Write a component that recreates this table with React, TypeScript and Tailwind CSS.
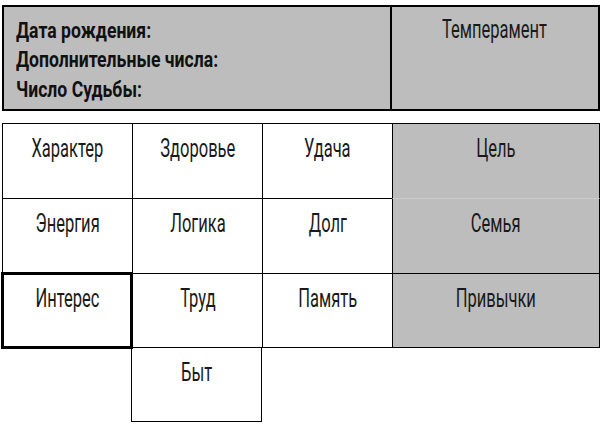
const font = { fontFamily: 'Roboto, "Liberation Sans", sans-serif' }

type Cell = { label?: string; tone?: 'white' | 'grey' | 'none'; cls: string }

const rows: Cell[][] = [
  [
    { label: 'Характер', cls: 'border-l border-t' },
    { label: 'Здоровье', cls: 'border-l border-t' },
    { label: 'Удача', cls: 'border-l border-t' },
    { label: 'Цель', tone: 'grey', cls: 'border-l border-t border-r' },
  ],
  [
    { label: 'Энергия', cls: 'border-l border-t' },
    { label: 'Логика', cls: 'border-l border-t' },
    { label: 'Долг', cls: 'border-l border-t' },
    { label: 'Семья', tone: 'grey', cls: 'border-l border-t border-r border-t-[#cbcbcb]' },
  ],
  [
    { label: 'Интерес', cls: 'border-l border-t border-b relative z-10 outline-3 outline-black -outline-offset-2' },
    { label: 'Труд', cls: 'border-l border-t border-b' },
    { label: 'Память', cls: 'border-l border-t border-b' },
    { label: 'Привычки', tone: 'grey', cls: 'border-l border-t border-r border-b' },
  ],
  [
    { tone: 'none', cls: 'border-r' },
    { label: 'Быт', cls: 'border-r border-b' },
    { tone: 'none', cls: '' },
    { tone: 'none', cls: '' },
  ],
]

function Label({ text }: { text: string }) {
  return (
    <span className="inline-block scale-x-[0.66] text-[25px] leading-none text-[#1a1a1a] whitespace-nowrap">{text}</span>
  )
}

export default function App() {
  return (
    <div className="w-[602px] h-[427px] bg-white pt-[5px] pl-[2px]" style={font}>
      <div className="flex w-[598px] h-[106px] border-2 border-black bg-[#bdbdbd]">
        <div className="w-[388px] border-r-2 border-black pl-[12px] pt-[9px]">
          {['Дата рождения:', 'Дополнительные числа:', 'Число Судьбы:'].map((t) => (
            <div key={t} className="h-[29.5px] flex items-center">
              <span className="inline-block origin-left scale-x-[0.8] text-[22px] font-bold leading-none text-[#111] whitespace-nowrap">
                {t}
              </span>
            </div>
          ))}
        </div>
        <div className="flex-1 flex justify-center pt-[10px]">
          <Label text="Темперамент" />
        </div>
      </div>

      <div className="mt-[12px] grid grid-cols-[130px_130px_130px_208px] grid-rows-[75px_75px_75px_74px]">
        {rows.flat().map((c, i) => (
          <div
            key={i}
            className={`border-black flex justify-center pt-[12px] ${
              c.tone === 'grey' ? 'bg-[#bdbdbd]' : 'bg-white'
            } ${c.cls}`}
          >
            {c.label && <Label text={c.label} />}
          </div>
        ))}
      </div>
    </div>
  )
}
